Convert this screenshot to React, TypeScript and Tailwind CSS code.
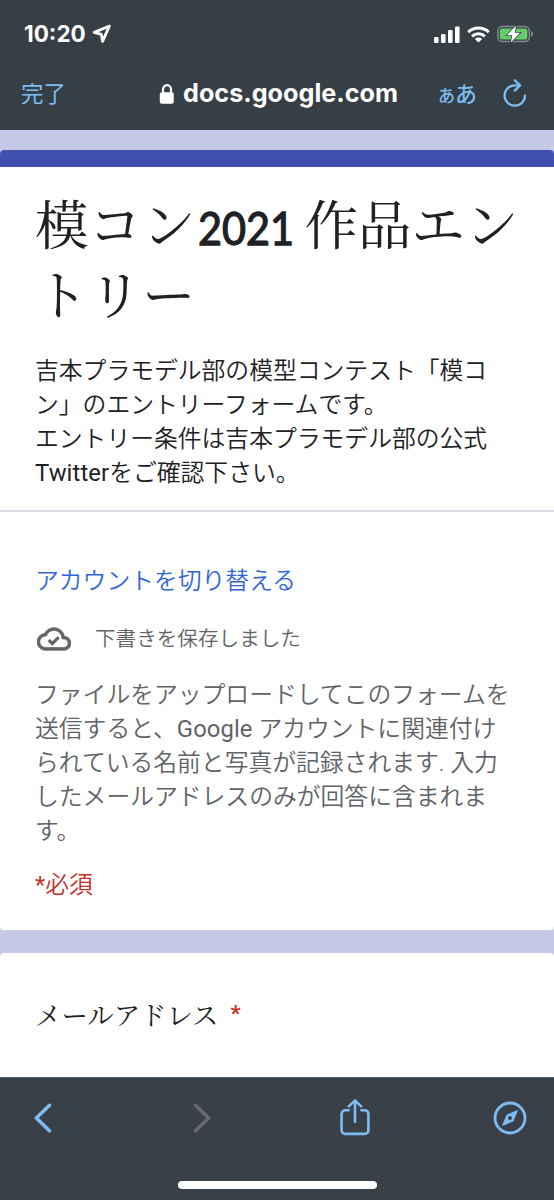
import React from 'react';

const descriptionLines = [
  '吉本プラモデル部の模型コンテスト「模コ',
  'ン」のエントリーフォームです。',
  'エントリー条件は吉本プラモデル部の公式',
  'Twitterをご確認下さい。',
];

const noticeLines = [
  'ファイルをアップロードしてこのフォームを',
  '送信すると、Google アカウントに関連付け',
  'られている名前と写真が記録されます. 入力',
  'したメールアドレスのみが回答に含まれま',
  'す。',
];

// Latin words are set one step heavier than the Japanese around them
const TextLine = ({ text }: { text: string }) => (
  <span className="block">
    {text.split(/([A-Za-z]+)/).map((part, index) =>
      index % 2 === 1 ? (
        <span key={index} className="font-normal tracking-[0.1px]">{part}</span>
      ) : (
        part
      )
    )}
  </span>
);

const StatusBar = () => (
  <div className="flex h-[68px] items-center justify-between pl-[24px] pr-[20px]">
    <div className="flex items-center gap-[6px]">
      <span className="font-['Inter'] text-[22.5px] font-bold leading-none">10:20</span>
      <svg width="20" height="20" viewBox="0 0 20 20" fill="none" stroke="#fff" strokeWidth="2.8" strokeLinejoin="round">
        <path d="M17.4 2 2.2 8.4l7.2 2 1.2 7z" />
      </svg>
    </div>
    <div className="flex items-center">
      <svg width="26" height="17" viewBox="0 0 26 17" fill="#fff">
        <rect x="0" y="11" width="4.6" height="6" rx="1.2" />
        <rect x="7" y="8" width="4.6" height="9" rx="1.2" />
        <rect x="14" y="4" width="4.6" height="13" rx="1.2" />
        <rect x="21" y="0.5" width="4.6" height="16.5" rx="1.2" />
      </svg>
      <svg className="ml-[7px]" width="23" height="17" viewBox="0 0 23 17" fill="none" stroke="#fff" strokeWidth="3">
        <path d="M1.2 6.1a15 15 0 0 1 20.6 0" />
        <path d="M5.1 10.3a9.3 9.3 0 0 1 12.8 0" />
        <path d="M11.5 16.6 7.8 12.9a5.4 5.4 0 0 1 7.4 0z" fill="#fff" stroke="none" />
      </svg>
      <svg className="ml-[7px]" width="37" height="18" viewBox="0 0 37 18">
        <rect x="0.9" y="1.4" width="31.4" height="15.2" rx="4.4" fill="none" stroke="#858a8f" strokeWidth="1.5" />
        <path d="M34 6v6q2-1 2-3t-2-3z" fill="#858a8f" />
        <rect x="2.8" y="3.4" width="27.6" height="11.2" rx="2.6" fill="#65cf67" />
        <path d="M19 .8 9.9 10.2h5.4L13.8 17.4 23.2 7.7h-5.5z" fill="#fff" stroke="#363e46" strokeWidth="1.5" paintOrder="stroke" />
      </svg>
    </div>
  </div>
);

const AddressBar = () => (
  <div className="flex h-[62px] items-center pb-[11px] pl-[21px] pr-[26px] text-[#7dbdf2]">
    <span className="w-[138px] pt-px text-[22.5px] leading-none">完了</span>
    <svg width="16" height="22" viewBox="0 0 16 22">
      <path d="M4 10V6.5a4 4.3 0 0 1 8 0V10" fill="none" stroke="#fff" strokeWidth="2.2" />
      <rect x="0.8" y="9.3" width="14" height="11.4" rx="2" fill="#fff" />
    </svg>
    <span className="ml-[8px] w-[255px] whitespace-nowrap font-['Inter'] text-[25.2px] font-bold leading-none text-white">
      docs.google.com
    </span>
    <span className="flex w-[65px] items-baseline whitespace-nowrap pt-[3px] leading-none">
      <span className="text-[17px] font-medium">あ</span>
      <span className="text-[22px] font-medium">あ</span>
    </span>
    <svg width="24" height="30" viewBox="0 0 24 30" fill="none" stroke="#7dbdf2" strokeWidth="2.3" strokeLinecap="round" strokeLinejoin="round">
      <path d="M22 16.5A10.2 10.2 0 1 1 11.8 6.3h4.8" />
      <path d="m11.8 1.2 5.2 5.2-5.2 5.2" />
    </svg>
  </div>
);

const Toolbar = () => (
  <div className="h-[123px] border-t border-[#5a6067] bg-[#3a4048]">
    <div className="flex h-[79px] items-center pl-[33px]">
      <svg width="20" height="30" viewBox="0 0 20 30" fill="none" stroke="#7dbdf2" strokeWidth="3.6" strokeLinecap="round" strokeLinejoin="round">
        <path d="M16.5 2.3 3.3 15l13.2 12.7" />
      </svg>
      <svg className="ml-[139px]" width="20" height="30" viewBox="0 0 20 30" fill="none" stroke="#666b72" strokeWidth="3.6" strokeLinecap="round" strokeLinejoin="round">
        <path d="M3.5 2.3 16.7 15 3.5 27.7" />
      </svg>
      <svg className="ml-[128px]" width="30" height="38" viewBox="0 0 30 38" fill="none" stroke="#7dbdf2" strokeWidth="2.6" strokeLinecap="round" strokeLinejoin="round">
        <path d="M9.6 11.3H5.2a3.6 3.6 0 0 0-3.6 3.6v16.4a3.6 3.6 0 0 0 3.6 3.6h19.6a3.6 3.6 0 0 0 3.6-3.6V14.9a3.6 3.6 0 0 0-3.6-3.6h-4.4" strokeLinecap="butt" />
        <path d="M15 23V1.6M8.8 7.4 15 1.4l6.2 6" />
      </svg>
      <svg className="ml-[123px]" width="34" height="34" viewBox="0 0 34 34">
        <circle cx="17" cy="17" r="15" fill="none" stroke="#7dbdf2" strokeWidth="2.8" />
        <path d="m24.4 9.6-4.4 10.4L9.6 24.4 14 14z" fill="#7dbdf2" stroke="#7dbdf2" strokeLinejoin="round" />
        <circle cx="17" cy="17" r="2" fill="#3a4048" />
      </svg>
    </div>
    <div className="mx-auto mt-[24px] h-[8px] w-[199px] rounded-full bg-white" />
  </div>
);

const App = () => {
  return (
    <div className="flex h-[1200px] w-[554px] flex-col overflow-hidden bg-[#c6c9e5] font-['Roboto','Noto_Sans_CJK_JP',sans-serif]">
      <header className="h-[130px] shrink-0 bg-[#363e46] text-white">
        <StatusBar />
        <AddressBar />
      </header>

      <main className="h-[947px] shrink-0 overflow-hidden pt-[20px]">
        {/* Form header card */}
        <section className="h-[781px] overflow-hidden rounded-[4px] border-b border-[#cdcddb] bg-white">
          <div className="h-[17px] bg-[#4150ae]" />
          <div className="h-[345px] border-b-2 border-[#dadce6] pl-[35px] pt-[20px] text-[#202124]">
            <h1 className="h-[140px] whitespace-nowrap font-['Noto_Serif_CJK_JP','Noto_Sans_CJK_JP',serif] text-[53.5px] font-normal leading-[70px]">
              模コン
              <span className="inline-block w-[109px] pl-[2px] font-['Lato'] text-[46px] leading-none">
                <span className="inline-block origin-left scale-x-[0.9] [-webkit-text-stroke:1.3px_#202124]">2021</span>
              </span>
              作品エン
              <br />
              トリー
            </h1>
            <p className="mt-[27px] whitespace-nowrap text-[23.8px] font-[350] leading-[34px]">
              {descriptionLines.map((line) => (
                <TextLine key={line} text={line} />
              ))}
            </p>
          </div>

          <div className="whitespace-nowrap pl-[35px] pt-[52px] text-[23.8px] font-[350] leading-[34px] text-[#5f6368]">
            <div className="text-[#3367d6]">アカウントを切り替える</div>
            <div className="mt-[24px] flex h-[34px] items-center">
              <svg className="ml-[2px]" width="34" height="34" viewBox="0 0 24 24" fill="#5f6368" stroke="#5f6368" strokeWidth="0.5">
                <path d="M19.35 10.04A7.49 7.49 0 0 0 12 4C9.11 4 6.6 5.64 5.35 8.04A5.994 5.994 0 0 0 0 14c0 3.31 2.69 6 6 6h13c2.76 0 5-2.24 5-5 0-2.64-2.05-4.78-4.65-4.96zM19 18H6c-2.21 0-4-1.79-4-4 0-2.05 1.53-3.76 3.56-3.97l1.07-.11.5-.95A5.469 5.469 0 0 1 12 6c2.62 0 4.88 1.86 5.39 4.43l.3 1.5 1.53.11A2.98 2.98 0 0 1 22 15c0 1.65-1.35 3-3 3z" />
                <path d="m10.8 13.9-1.7-1.7-1.3 1.3 3 3 5-5-1.3-1.3z" />
              </svg>
              <span className="ml-[24px] text-[20.6px]">下書きを保存しました</span>
            </div>
            <p className="mt-[22px]">
              {noticeLines.map((line) => (
                <TextLine key={line} text={line} />
              ))}
            </p>
            <div className="mt-[20px] text-[#c5302a]">
              <span className="font-normal">*</span>必須
            </div>
          </div>
        </section>

        {/* Email question */}
        <section className="mt-[22px] h-[160px] rounded-t-[4px] bg-white pl-[35px] pt-[44px] text-[#202124]">
          <div className="flex whitespace-nowrap font-['Noto_Serif_CJK_JP','Noto_Sans_CJK_JP',serif] text-[26.4px] font-normal leading-[34px]">
            メールアドレス
            <span className="ml-[12px] font-['Roboto'] text-[22px] font-bold text-[#c5362c]">*</span>
          </div>
        </section>
      </main>

      <Toolbar />
    </div>
  );
};

export default App;
